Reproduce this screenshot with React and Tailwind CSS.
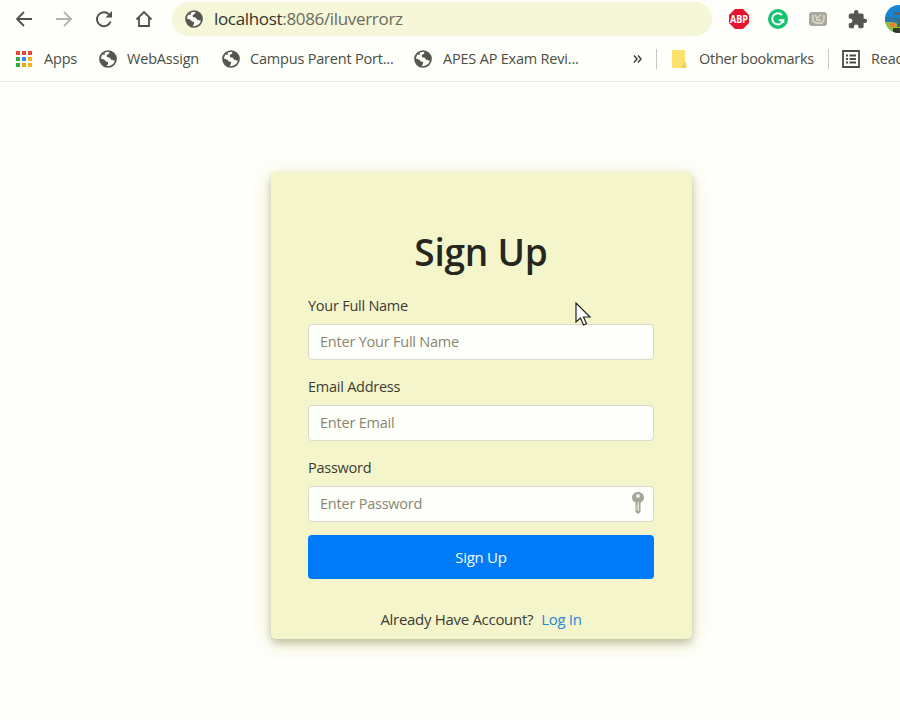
import React from "react";

function Globe() {
  return (
    <svg viewBox="0 0 18 18" className="h-[18px] w-[18px] shrink-0">
      <circle cx="9" cy="9" r="8" fill="#fdfdf8" stroke="#55564f" strokeWidth="1.7" />
      <path d="M1.5 8.5 5 9.4l2 2.2 2.2.5-.3 2.2-1.7 2.2C3.6 15.8 1.3 12.800 1.500 8.500ZM6 2.200 10.500 1.400 10 3.800 7.700 5l.2 2 3 .8 1.200 1.900 2 .2 1.300 1.700 1.200-4.600C15.800 4 13.500 1.600 10.500 1.300L6 2 3.200 4.600 5.500 5Z" fill="#55564f" />
    </svg>
  );
}

function AppsGrid() {
  const dots = ["#e8453c", "#e8453c", "#e8453c", "#34a853", "#2b8de8", "#f6b01e", "#34a853", "#f6a21e", "#f6b01e"];
  return (
    <div className="grid h-4 w-4 shrink-0 grid-cols-3 gap-[2px]">
      {dots.map((c, i) => <i key={i} style={{ backgroundColor: c }} />)}
    </div>
  );
}

function Toolbar() {
  return (
    <div className="flex h-[38px] items-center">
      <svg viewBox="0 0 18 18" className="ml-[15px] h-[18px] w-[18px] shrink-0" fill="none" stroke="#50514a" strokeWidth="1.8"><path d="M17 9H2M9 2 2 9l7 7" /></svg>
      <svg viewBox="0 0 18 18" className="ml-[22px] h-[18px] w-[18px] shrink-0" fill="none" stroke="#b4b4ac" strokeWidth="1.8"><path d="M1 9h15M9 2l7 7-7 7" /></svg>
      <svg viewBox="0 0 18 18" className="ml-[22px] h-[18px] w-[18px] shrink-0" fill="none" stroke="#50514a" strokeWidth="1.9"><path d="M15.600 11.500A7 7 0 1 1 14 4.300" /><path d="M17 1v6.500h-6.500Z" fill="#50514a" stroke="none" /></svg>
      <svg viewBox="0 0 18 18" className="ml-[22px] h-[18px] w-[18px] shrink-0" fill="none" stroke="#50514a" strokeWidth="1.8"><path d="M1.500 9.500 9 2l7.500 7.500M4 8v8h10V8" /></svg>
      <div className="ml-[19px] flex h-[34px] w-[540px] shrink-0 items-center rounded-full bg-[#f6f6d8] pl-[13px]">
        <Globe />
        <span className="ml-[11px] whitespace-nowrap text-[17px] tracking-[-0.33px] text-[#6b6c5e]"><span className="text-[#33342b]">localhost</span>:8086/iluverrorz</span>
      </div>
      <svg viewBox="0 0 22 22" className="ml-[16px] h-[22px] w-[22px] shrink-0"><path d="M7 1h8l6 6v8l-6 6H7l-6-6V7Z" fill="#e4142c" /><text x="11" y="15" textAnchor="middle" fontSize="11" fontWeight="700" textLength="18" lengthAdjust="spacingAndGlyphs" fill="#fff" fontFamily="Open Sans">ABP</text></svg>
      <svg viewBox="0 0 20 20" className="ml-[18px] h-5 w-5 shrink-0"><circle cx="10" cy="10" r="10" fill="#15c26e" /><path d="M14 6A5.600 5.600 0 1 0 15.300 11.200H10.800M15.300 11.200V14" fill="none" stroke="#fff" strokeWidth="1.9" /></svg>
      <svg viewBox="0 0 20 14" className="ml-[20px] h-[14px] w-5 shrink-0"><rect x="1" width="18" height="14" rx="3" fill="#aaa99c" /><path d="M5 3v6l3 2h6l2-3V3M7 3l2 3 4-3M8 8h5" fill="none" stroke="#e0e0d2" strokeWidth="1.300" /></svg>
      <svg viewBox="0 0 24 24" className="ml-[19px] h-[21px] w-[21px] shrink-0" fill="#55564f"><path d="M20.500 11H19V7a2 2 0 0 0-2-2h-4V3.500a2.500 2.500 0 0 0-5 0V5H4a2 2 0 0 0-2 2v3.800h1.500a2.700 2.700 0 0 1 0 5.400H2V20a2 2 0 0 0 2 2h3.800v-1.500a2.700 2.700 0 0 1 5.400 0V22H17a2 2 0 0 0 2-2v-4h1.500a2.500 2.500 0 0 0 0-5Z" /></svg>
      <svg viewBox="0 0 28 28" className="ml-[17px] h-7 w-7 shrink-0"><defs><clipPath id="avatar"><circle cx="14" cy="14" r="14" /></clipPath></defs><g clipPath="url(#avatar)"><path d="M0 0h28v28H0Z" fill="#1685d2" /><path d="M0 12h28v5H0Z" fill="#2a78a8" /><path d="M0 17h8l8 3v8H0Z" fill="#8fbf3c" /><path d="M5 18h5v4H5Z" fill="#e7832c" /><path d="M8 7h13v3H8ZM12 14h9v8h-9Z" fill="#536575" /><path d="M8 23h12v5H8Z" fill="#37382a" /></g></svg>
    </div>
  );
}

function Bookmarks() {
  return (
    <div className="flex h-[42px] items-center whitespace-nowrap text-[14.500px] tracking-[-0.2px] text-[#4c4d43]">
      <div className="ml-4 flex w-[83px] shrink-0 items-center gap-3"><AppsGrid /><span>Apps</span></div>
      <div className="flex w-[123px] shrink-0 items-center gap-[10px]"><Globe /><span>WebAssign</span></div>
      <div className="flex w-[192px] shrink-0 items-center gap-[10px]"><Globe /><span>Campus Parent Port...</span></div>
      <div className="flex w-[219px] shrink-0 items-center gap-[11px]"><Globe /><span>APES AP Exam Revi...</span></div>
      <svg viewBox="0 0 9 8" className="h-2 w-[9px] shrink-0" fill="none" stroke="#43443b" strokeWidth="1.500"><path d="m1 .5 3 3.500-3 3.500M5 .5 8 4 5 7.500" /></svg>
      <i className="ml-[14px] h-5 w-px shrink-0 bg-[#c9c9bd]" />
      <svg viewBox="0 0 16 18" className="ml-[14px] h-[18px] w-4 shrink-0"><path d="M1 0h13v12l1.500 1v5H1Z" fill="#fbe26c" /><path d="M14 12v6h-3Z" fill="#edc84e" /></svg>
      <span className="ml-3 w-[129px] shrink-0 tracking-[-0.27px]">Other bookmarks</span>
      <i className="h-5 w-px shrink-0 bg-[#c9c9bd]" />
      <svg viewBox="0 0 18 18" className="ml-[13px] h-[18px] w-[18px] shrink-0" fill="none" stroke="#4b4c44" strokeWidth="1.800"><path d="M1 1h16v16H1ZM4 5.500h2M7.500 5.500H14M4 9h2M7.500 9H14M4 12.500h2M7.500 12.500H14" /></svg>
      <span className="ml-[11px]">Reading list</span>
    </div>
  );
}

function Key() {
  return (
    <svg viewBox="0 0 14 24" className="-mt-[2px] h-6 w-[14px]"><path d="M7 1C3.500 1 1 3.500 1 6.500c0 2.400 1.500 4.300 3.500 5V21L7 23l2.500-2v-9.500c2-.7 3.500-2.600 3.500-5C13 3.500 10.500 1 7 1Z" fill="#a5a598" /><circle cx="7" cy="5" r="2" fill="#eeeee2" /><path d="M7.300 11v9M5 15h2M5 18h2" stroke="#e9e9dc" strokeWidth="1.200" /></svg>
  );
}

function Field({ label, placeholder, secret, className }) {
  return (
    <label className={className}>
      <span className="block h-6 text-[14.500px] leading-6 tracking-[-0.25px] text-[#3b3c32]">{label}</span>
      <span className="mt-[6px] flex h-9 items-center justify-between rounded-[4px] border border-[#d9d9cc] bg-[#fefefb] pr-2 pl-[11px] text-[14.500px] tracking-[-0.22px] text-[#87886f]">
        {placeholder}{secret && <Key />}
      </span>
    </label>
  );
}

export default function App() {
  return (
    <div className="relative flex h-[720px] w-[900px] flex-col overflow-hidden bg-[#fefefa] font-['Open_Sans','Noto_Sans',sans-serif]">
      <header className="h-[82px] shrink-0 border-b border-[#ebebdf] bg-[#fefefb]">
        <Toolbar /><Bookmarks />
      </header>
      <main className="mt-[90px] ml-[271px] flex h-[467px] w-[421px] flex-col rounded-[5px] bg-[#f5f5cc] pr-[38px] pl-[37px] shadow-[0_4px_8px_0_rgba(0,0,0,0.22),0_4px_18px_0_rgba(190,190,0,0.25)]">
        <h1 className="mt-[54px] h-[52px] text-center text-[37px] leading-[52px] font-semibold tracking-[-0.2px] text-[#25261e]">Sign Up</h1>
        <Field className="mt-4 h-[81px]" label="Your Full Name" placeholder="Enter Your Full Name" />
        <Field className="h-[81px]" label="Email Address" placeholder="Enter Email" />
        <Field className="h-[79px]" label="Password" placeholder="Enter Password" secret />
        <button className="h-11 shrink-0 rounded-[4px] bg-[#007bf8] text-[15px] tracking-[-0.3px] text-[#f4fbff]">Sign Up</button>
        <p className="mt-[28px] text-center text-[15px] leading-6 tracking-[-0.3px] text-[#3b3c32]">Already Have Account?<a className="ml-2 text-[#2887d8]">Log In</a></p>
      </main>
      <svg viewBox="0 0 17 25" className="absolute top-[302px] left-[575px] h-[25px] w-[17px]"><path d="M1 1v19l4.500-4 3 7 3-1.300-3-6.700H15Z" fill="#fff" stroke="#22231c" strokeWidth="1.200" /></svg>
    </div>
  );
}
